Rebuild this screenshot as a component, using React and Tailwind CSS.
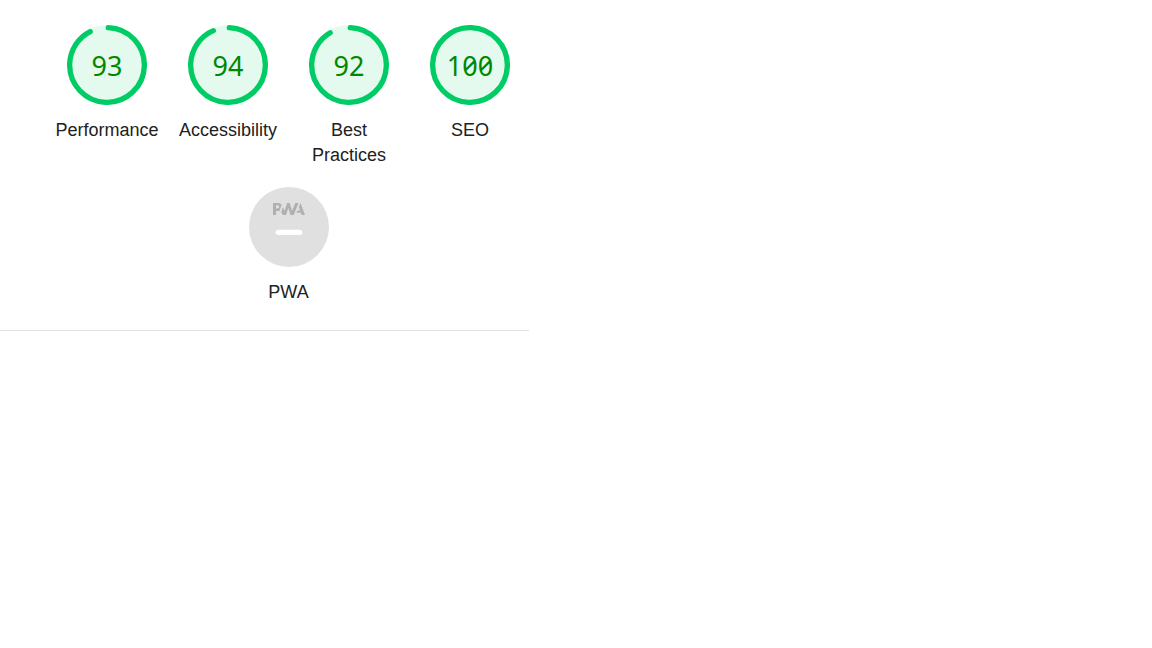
const scores = [
  { label: 'Performance', score: 93 },
  { label: 'Accessibility', score: 94 },
  { label: 'Best Practices', score: 92 },
  { label: 'SEO', score: 100 },
];

const RADIUS = 56;
const STROKE = 8;
const CIRCUMFERENCE = 2 * Math.PI * RADIUS;

function Gauge({ label, score }) {
  const arc = score === 100 ? CIRCUMFERENCE : (score / 100) * CIRCUMFERENCE - STROKE / 2;
  return (
    <a href={'#' + label.toLowerCase().replace(' ', '-')} className="flex w-[104px] flex-col items-center gap-[13px]">
      <div className="grid size-20 place-items-center">
        <svg viewBox="0 0 120 120" className="col-start-1 row-start-1 size-20" aria-hidden="true">
          <circle cx="60" cy="60" r="60" fill="#e5faef" />
          <circle
            cx="60"
            cy="60"
            r={RADIUS}
            fill="none"
            stroke="#00cc66"
            strokeWidth={STROKE}
            strokeLinecap="round"
            strokeDasharray={`${arc} ${CIRCUMFERENCE}`}
            transform="rotate(-88 60 60)"
          />
        </svg>
        <span className="col-start-1 row-start-1 pt-0.5 font-['Noto_Sans',sans-serif] text-[27px] leading-8 text-[#008800] slashed-zero">
          {score}
        </span>
      </div>
      <span className="text-center text-lg leading-[25px]">{label}</span>
    </a>
  );
}

function PwaGauge() {
  return (
    <a href="#pwa" className="flex w-[104px] flex-col items-center gap-[13px]">
      <svg viewBox="0 0 60 60" className="size-20" aria-hidden="true">
        <circle cx="30" cy="30" r="30" fill="#e0e0e0" />
        <g fill="#b0b0b0">
          <path d="M35.66 19.39l.7-1.75h2L37.4 15 38.6 12l3.4 9h-2.51l-.58-1.61z" />
          <path d="M33.52 21l3.65-9h-2.42l-2.5 5.82L30.5 12h-1.86l-1.9 5.82-1.35-2.65-1.21 3.72L25.4 21h2.38l1.72-5.2 1.64 5.2z" />
          <path
            fillRule="evenodd"
            d="M20.3 17.91h1.48c.45 0 .85-.05 1.2-.15l.39-1.18 1.07-3.3a2.64 2.64 0 0 0-.28-.37c-.55-.6-1.36-.91-2.42-.91H18v9h2.3V17.9zm1.96-3.84c.22.22.33.5.33.87 0 .36-.1.65-.29.87-.2.23-.59.35-1.15.35h-.86v-2.41h.87c.52 0 .89.1 1.1.32z"
          />
        </g>
        <rect x="20" y="32" width="20" height="4" rx="2" fill="#fff" />
      </svg>
      <span className="text-center text-lg leading-[25px]">PWA</span>
    </a>
  );
}

export default function App() {
  return (
    <main className="min-h-screen bg-white font-['Liberation_Sans',Arial,sans-serif] text-[#212121]">
      <header className="max-w-[529px] border-b border-[#e0e0e0] pt-[25px] pb-[25px] pl-12">
        <nav aria-label="Category scores" className="flex flex-wrap justify-center gap-x-[17px] gap-y-[19px]">
          {scores.map((item) => (
            <Gauge key={item.label} {...item} />
          ))}
          <PwaGauge />
        </nav>
      </header>
    </main>
  );
}
